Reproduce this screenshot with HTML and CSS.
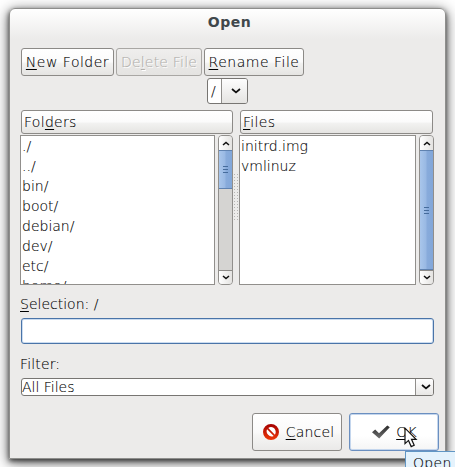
FILE: index.html
```html
<!DOCTYPE html>
<html lang="en">
<head>
<meta charset="utf-8">
<title>Open</title>
<link rel="stylesheet" href="styles.css">
</head>
<body>
<main class="dialog">
  <h1 class="title">Open</h1>
  <div class="toolbar">
    <button class="btn new"><span><u>N</u>ew Folder</span></button>
    <button class="btn delete" disabled><span>De<u>l</u>ete File</span></button>
    <button class="btn rename"><span><u>R</u>ename File</span></button>
  </div>
  <div class="path"><span class="path-text">/</span><span class="path-arrow"><svg width="10" height="6" viewBox="0 0 10 6"><path class="chev" d="M1 1l4 3.4 4-3.4"/></svg></span></div>
  <div class="panes">
    <section class="pane folders">
      <div class="head"><span>Fol<u>d</u>ers</span></div>
      <div class="body">
        <ul class="list"><li>./</li><li>../</li><li>bin/</li><li>boot/</li><li>debian/</li><li>dev/</li><li>etc/</li><li>home/</li></ul>
        <div class="scroll">
          <span class="step up"><svg width="8" height="5" viewBox="0 0 8 5"><path class="chev thin" d="M1 4l3-2.6L7 4"/></svg></span>
          <span class="thumb"><i class="grip"></i></span>
          <span class="track"></span>
          <span class="step down"><svg width="8" height="5" viewBox="0 0 8 5"><path class="chev thin" d="M1 1l3 2.6L7 1"/></svg></span>
        </div>
      </div>
    </section>
    <div class="splitter"></div>
    <section class="pane files">
      <div class="head"><span><u>F</u>iles</span></div>
      <div class="body">
        <ul class="list"><li>initrd.img</li><li>vmlinuz</li></ul>
        <div class="scroll">
          <span class="step up"><svg width="8" height="5" viewBox="0 0 8 5"><path class="chev thin" d="M1 4l3-2.6L7 4"/></svg></span>
          <span class="thumb full"><i class="grip"></i></span>
          <span class="step down"><svg width="8" height="5" viewBox="0 0 8 5"><path class="chev thin" d="M1 1l3 2.6L7 1"/></svg></span>
        </div>
      </div>
    </section>
  </div>
  <div class="label"><span><u>S</u>election: /</span></div>
  <div class="entry"></div>
  <div class="label filter-label"><span>Filter:</span></div>
  <div class="filter"><span class="filter-text">All Files</span><span class="filter-arrow"><svg width="10" height="6" viewBox="0 0 10 6"><path class="chev" d="M1 1l4 3.4L9 1"/></svg></span></div>
  <div class="actions">
    <button class="btn action cancel">
      <svg width="16" height="16" viewBox="0 0 16 16"><defs><linearGradient id="red" x2="0" y2="1"><stop stop-color="#a30000"/><stop offset="1" stop-color="#f03808"/></linearGradient></defs><circle cx="8" cy="8" r="6.3" fill="#fff"/><path d="M8 0a8 8 0 1 0 0 16A8 8 0 0 0 8 0zM8 3a5 5 0 0 1 3.9 7.7L5.3 4.1A5 5 0 0 1 8 3zM4.1 5.3l6.6 6.6A5 5 0 0 1 4.1 5.3z" fill="url(#red)"/></svg>
      <span><u>C</u>ancel</span>
    </button>
    <button class="btn action ok">
      <svg width="18" height="14" viewBox="0 0 18 14"><defs><linearGradient id="ink" x2="0" y2="1"><stop stop-color="#2a2a2a"/><stop offset="1" stop-color="#707070"/></linearGradient></defs><path d="M0 7.2L3.2 4.4 7 8.2 15.3.4 17.8 2.2 7.2 13.6z" fill="url(#ink)"/></svg>
      <span><u>O</u>K</span>
    </button>
  </div>
</main>
<div class="tooltip">Open</div>
<svg class="cursor" width="14" height="21" viewBox="0 0 14 21"><path d="M1 1.2v15.4l3.5-3.2 2.7 6.2 3-1.3-2.7-6h4.6z"/></svg>
</body>
</html>
```
FILE: styles.css
```css
* { box-sizing: border-box; }
html, body { margin: 0; height: 467px; overflow: hidden; }
body {
  position: relative;
  padding: 8px 9px;
  background: #fff;
  color: #000;
  font: 14px/20px "DejaVu Sans Light", "DejaVu Sans ExtraLight", "DejaVu Sans", sans-serif;
  -webkit-text-stroke: .1px currentColor;
}
u { text-decoration: underline; text-decoration-thickness: 1px; text-underline-offset: 2px; }
svg { display: block; flex: none; }
.dialog {
  width: 437px;
  height: 451px;
  padding: 0 11px;
  border: 1px solid #8e8e8c;
  border-radius: 6px 6px 0 0;
  background: linear-gradient(#fff, #ecebea 30px);
  box-shadow: 0 2px 5px rgba(0,0,0,.65), 0 3px 14px 1px rgba(0,0,0,.55);
}
.title { margin: 0; height: 39px; padding: 3px 0 0 4px; text-align: center; font: bold 14px/20px "DejaVu Sans", sans-serif; letter-spacing: .5px; color: #40474b; -webkit-text-stroke: 0; }
.btn {
  display: flex; align-items: center; justify-content: center;
  padding: 0; border: 1px solid #8c8a87; border-radius: 3px;
  background: linear-gradient(#fff 0, #fbfbfb 50%, #f2f2f1 55%, #e5e4e2);
  color: #000; font: inherit; letter-spacing: .5px; white-space: nowrap;
}
.toolbar { display: flex; gap: 2px; height: 28px; }
.new { width: 93px; }
.delete { width: 86px; letter-spacing: .2px; color: #b2b0ad; border-color: #a9a7a4; background: linear-gradient(#efeeed, #e4e3e1); text-shadow: 1px 1px #fff; }
.rename { width: 100px; }
.path {
  display: flex; width: 41px; height: 26px; margin: 2px 0 0 186px;
  border: 1px solid #777572; border-radius: 3px; overflow: hidden; background: #fff;
}
.path-text { width: 14px; padding: 2px 0 0 3px; border-right: 1px solid #908e8b; }
.path-arrow { flex: 1; display: flex; align-items: center; justify-content: center; padding-left: 2px; background: linear-gradient(#fdfdfd, #e5e4e2); }
.chev { fill: none; stroke: #111; stroke-width: 1.8; }
.thin { stroke-width: 1.5; }
.panes { display: flex; width: 414px; height: 175px; margin: 6px 0 0 -1px; }
.folders { width: 213px; }
.files { width: 195px; }
.splitter { width: 6px; height: 48px; margin-top: 63px; background: radial-gradient(circle at 1.5px 1.5px, #b5b4b2 0 .6px, transparent .9px) 0 0 / 3px 3px; }
.head {
  height: 24px; margin: 0 1px 1px; padding-left: 2px; border: 1px solid #8c8a87; border-radius: 3px;
  background: linear-gradient(#fff 0, #fbfbfb 50%, #f2f2f1 55%, #e5e4e2); line-height: 22px; letter-spacing: .3px;
}
.folders .head { margin-right: 0; }
.body { display: flex; justify-content: space-between; height: 150px; }
.list { flex: 1; margin: 0 3px 0 0; padding: 0 0 0 1px; list-style: none; border: 1px solid #918f8c; background: #fff; overflow: hidden; }
.list li { height: 20px; }
.scroll { width: 15px; display: flex; flex-direction: column; border: 1px solid #918f8c; border-radius: 4px; background: #d5d4d2; overflow: hidden; }
.step { height: 14px; flex: none; display: flex; align-items: center; justify-content: center; background: linear-gradient(90deg, #fff, #e4e3e1); }
.down { border-top: 1px solid #8c8a87; }
.track { flex: 1; }
.thumb { height: 39px; margin: 0 -1px; border: 1px solid #5f82b0; display: flex; align-items: center; justify-content: center; background: linear-gradient(90deg, #a9c6eb, #98b8e3 48%, #88abdb 52%, #82a7d9); }
.full { flex: 1; height: auto; }
.grip { width: 5px; height: 7px; background: linear-gradient(#466c9c 1px, transparent 1px) 0 0 / 5px 3px; }
.label { height: 20px; margin: 9px 0 0 -1px; }
.entry { width: 413px; height: 26px; margin-top: 4px; border: 1px solid #4a74a8; border-radius: 3px; background: #fff; box-shadow: inset 0 0 0 1px #cbdcf0; }
.filter-label { margin-top: 10px; letter-spacing: .15px; }
.filter { display: flex; width: 413px; height: 18px; margin-top: 4px; border: 1px solid #777572; border-radius: 3px; background: #fff; overflow: hidden; line-height: 16px; }
.filter-text { flex: 1; }
.filter-arrow { width: 18px; padding-left: 2px; border-left: 1px solid #908e8b; display: flex; align-items: center; justify-content: center; background: linear-gradient(#fff, #e8e7e5); }
.actions { display: flex; gap: 7px; margin: 17px -5px 0 231px; }
.action { width: 90px; height: 38px; flex: none; gap: 7px; letter-spacing: .2px; background: linear-gradient(#fff 0, #fafafa 50%, #f5f5f4 60%, #eae9e8); }
.cancel { padding-left: 3px; }
.ok { gap: 6px; padding-left: 1px; border-color: #6b8fc0; box-shadow: inset 0 0 0 1px #c4d6ed; background: linear-gradient(#fff 60%, #f5f5f5); }
.tooltip { position: absolute; left: 405px; top: 451px; width: 60px; height: 26px; padding: 1px 0 0 7px; border: 1px solid #6196c4; background: #e4f2fc; letter-spacing: .3px; }
.cursor { position: absolute; left: 404px; top: 427px; fill: #fff; stroke: #111; stroke-width: 1.2; }
```
